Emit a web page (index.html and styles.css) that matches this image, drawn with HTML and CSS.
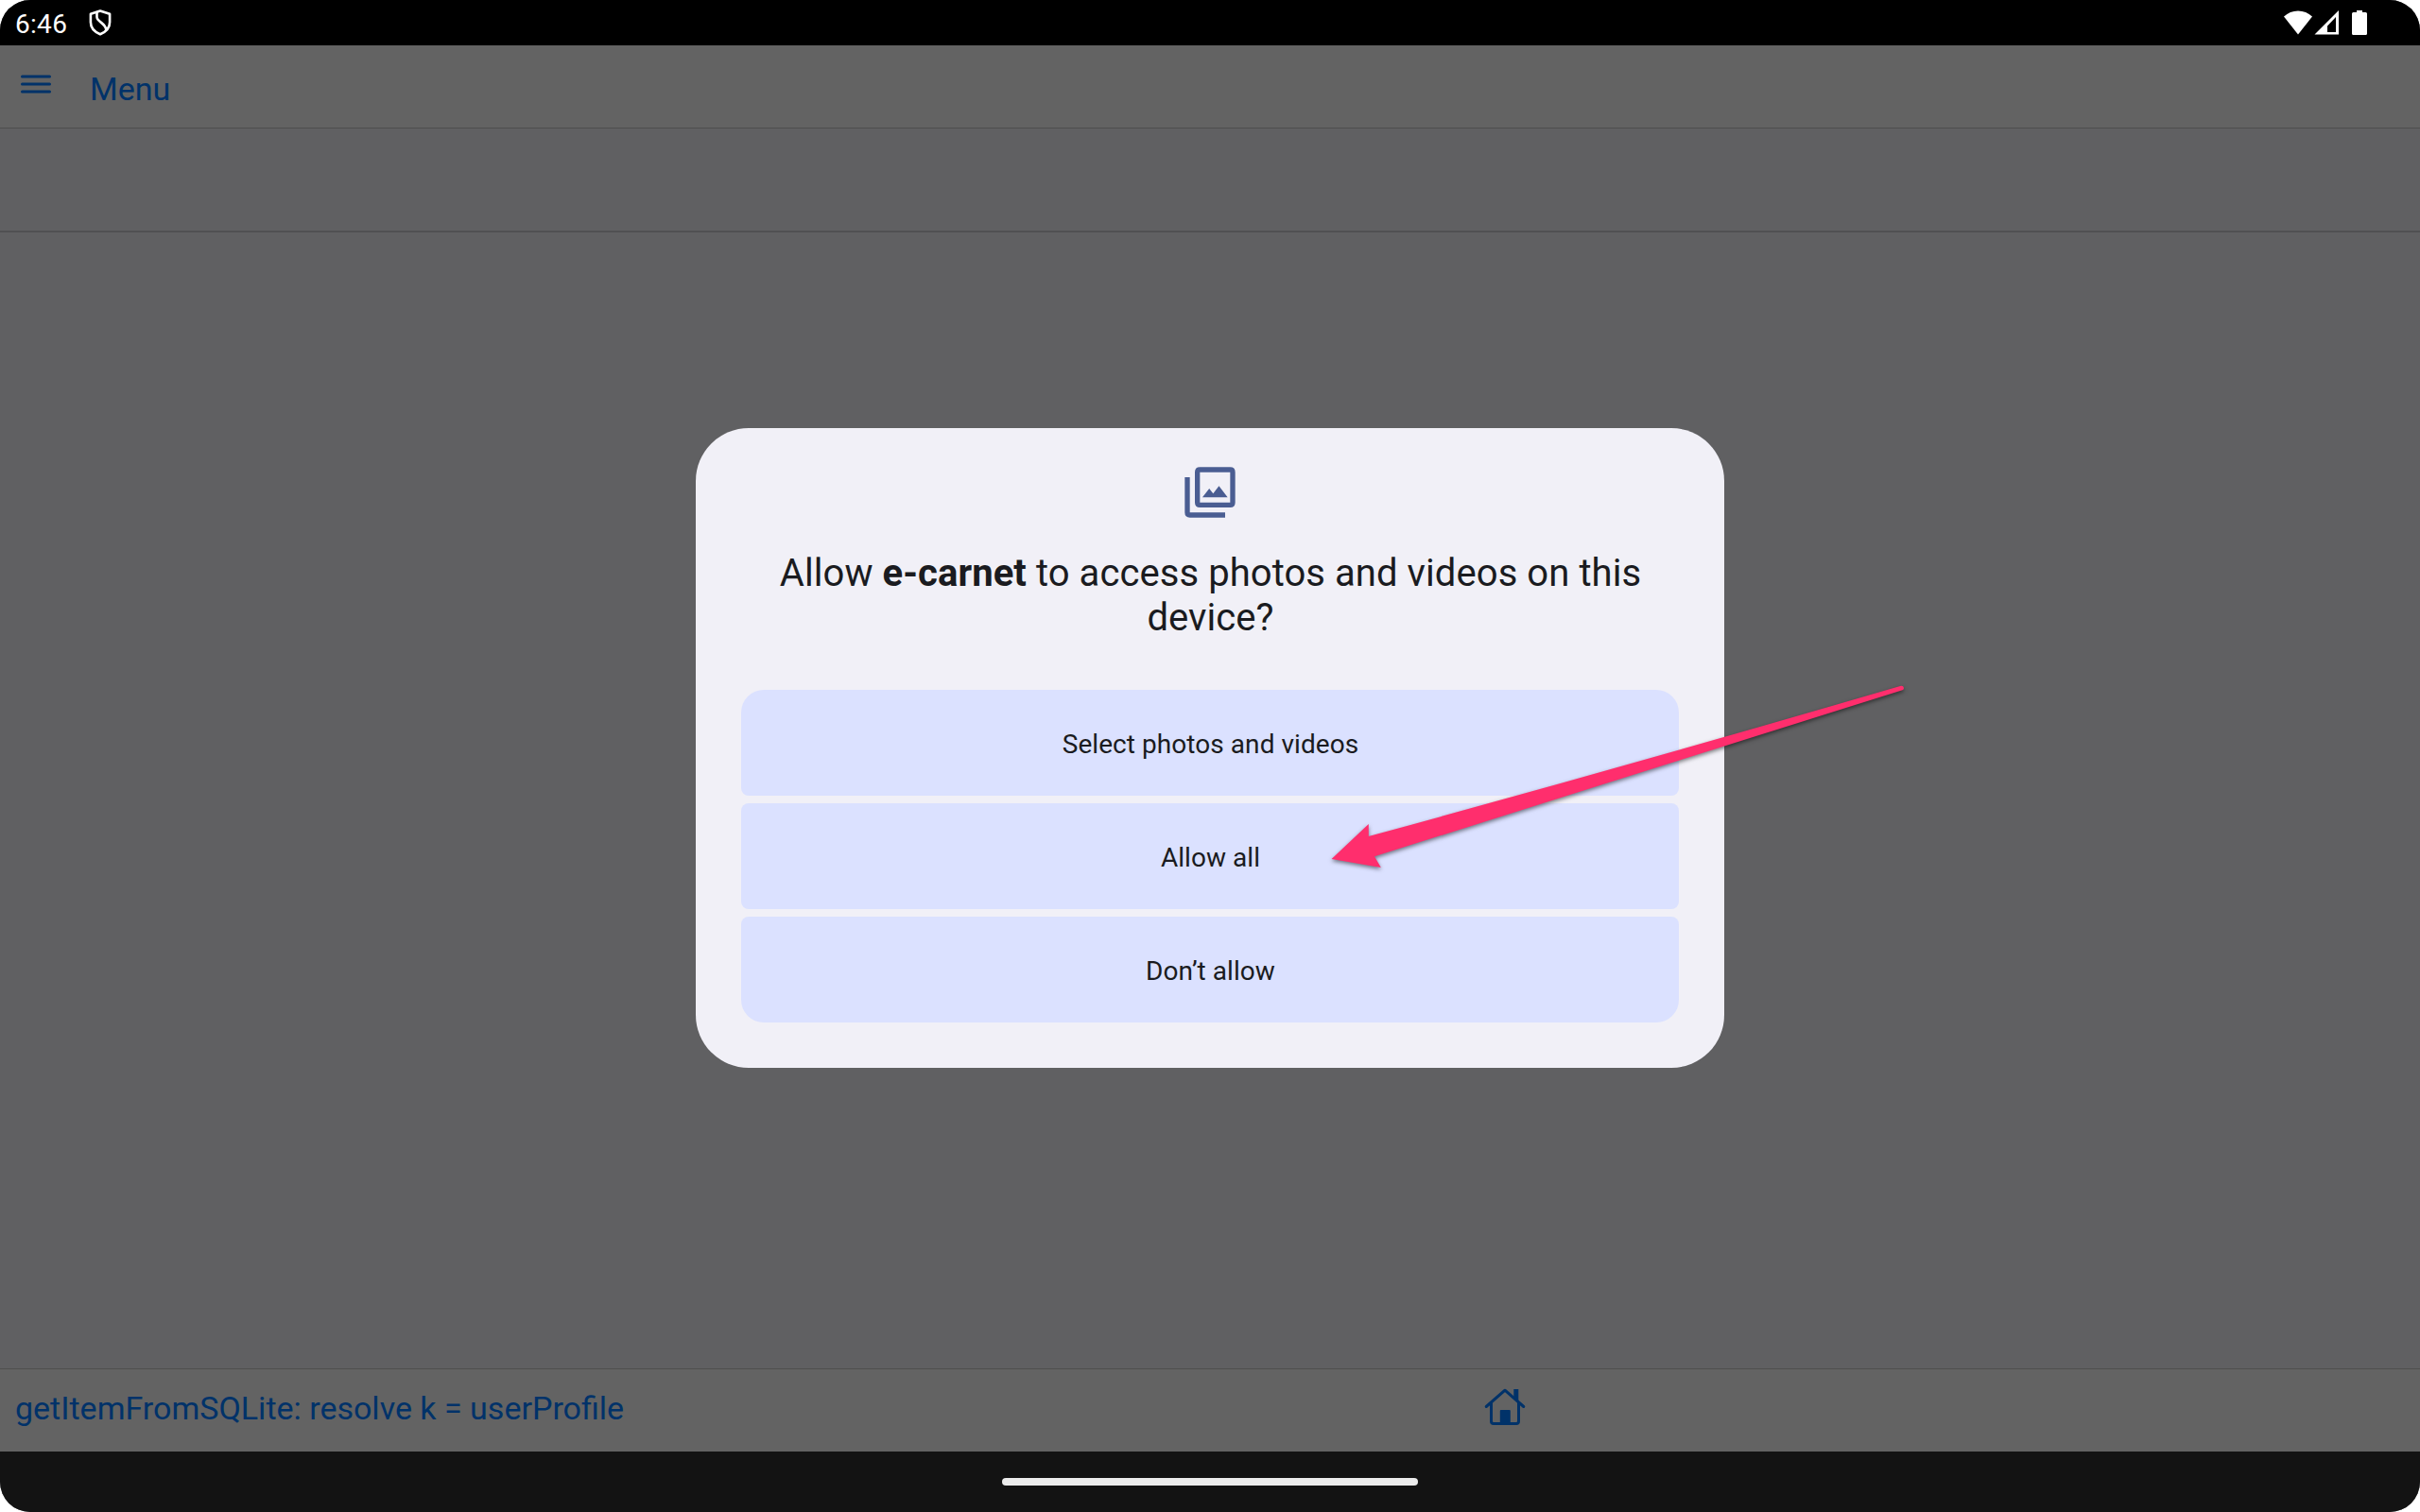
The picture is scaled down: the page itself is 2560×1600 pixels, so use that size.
FILE: index.html
```
<!DOCTYPE html>
<html lang="en">
<head>
<meta charset="utf-8">
<title>e-carnet</title>
<link rel="stylesheet" href="styles.css">
</head>
<body>
<div class="screen">
  <header class="status">
    <span class="clock">6:46</span>
    <svg class="shield" viewBox="0 0 24 28" fill="none" stroke="#fff" stroke-width="2.6" stroke-linejoin="round">
      <path d="M12 1.6 1.9 4.8v8.7c0 5.6 4.2 10.300 10.100 12.800 5.900-2.500 10.100-7.200 10.100-12.800V4.800Z"/>
      <path d="M8.500 2.800v5.200c0 5.200 9.800 6.500 9.800 14"/>
    </svg>
    <span class="grow"></span>
    <svg class="wifi" viewBox="0 0 30 26" fill="#fff"><path d="M0 6.500C4.200 2.500 9.200.5 15 .5s10.800 2 15 6L15 25.500Z"/></svg>
    <svg class="signal" viewBox="0 0 26 26"><path fill="#fff" fill-rule="evenodd" d="M.5 25.500 26 0v25.500ZM14 23h9V7l-9 9.500Z"/></svg>
    <svg class="battery" viewBox="0 0 16 26" fill="#fff"><path d="M5 0h6v2h3.500Q16 2 16 3.500v21q0 1.500-1.500 1.500h-13Q0 26 0 24.500v-21Q0 2 1.500 2H5Z"/></svg>
  </header>
  <nav class="toolbar">
    <svg class="burger" viewBox="0 0 32 20" stroke="#003269" stroke-width="3" stroke-linecap="round"><path d="M1.500 2h29M1.500 10h29M1.500 18h29"/></svg>
    <span class="toolbar-title">Menu</span>
  </nav>
  <div class="subbar"></div>
  <main class="content"></main>
  <footer class="footer">
    <span class="log">getItemFromSQLite: resolve k = userProfile</span>
    <svg class="home" viewBox="0 0 44 40" fill="none" stroke="#003269" stroke-width="3" stroke-linecap="round" stroke-linejoin="round">
      <path d="M2.200 19.500 22 2.200 41.800 19.500"/>
      <path d="M7.500 16v19q0 2.500 2.500 2.500h24q2.500 0 2.500-2.500V16"/>
      <path fill="#003269" stroke="none" d="M31.300 1h5v13l-5-4.500ZM16.800 24q0-1 1-1h9q1 0 1 1v13.500h-11Z"/>
    </svg>
  </footer>
  <div class="gesture"><div class="pill"></div></div>

  <div class="overlay">
    <section class="dialog" role="dialog">
      <svg class="library" viewBox="0 0 24 24" fill="#4a5d92"><path fill-rule="evenodd" d="M8 2h12q2 0 2 2v12q0 2-2 2H8q-2 0-2-2V4q0-2 2-2Zm0 2v12h12V4Z"/><path d="M9 14h10l-3.450-4.500-2.300 3-1.550-2ZM2 6h2v14h14v2H4q-2 0-2-2Z"/></svg>
      <h1 class="question">Allow <b>e-carnet</b> to access photos and videos on this device?</h1>
      <div class="choices">
        <button class="choice" type="button">Select photos and videos</button>
        <button class="choice" type="button">Allow all</button>
        <button class="choice" type="button">Don’t allow</button>
      </div>
    </section>
  </div>

  <svg class="arrow" viewBox="0 0 620 210" fill="#ff2e6d"><path d="M8.600 199 47.800 162V175Q330 98 611 15.800Q613.500 15.500 614 18Q614 20 612.500 20.300Q330 109 54 196.300L60.800 208Z"/></svg>
</div>
</body>
</html>
```
FILE: styles.css
```
* { box-sizing: border-box; }
html { background: #fff; }
body { margin: 0; font-family: Roboto, "Liberation Sans", sans-serif; }
svg { display: block; flex: none; }

.screen {
  position: relative;
  display: flex;
  flex-direction: column;
  width: 2560px;
  height: 1600px;
  overflow: hidden;
  border-radius: 32px;
  background: #606062;
}

.status {
  display: flex;
  align-items: flex-start;
  height: 48px;
  padding: 0 56px 0 16px;
  background: #000;
}
.clock { width: 78px; padding-top: 9px; color: #fff; font-size: 28px; line-height: 33px; letter-spacing: 0.3px; }
.shield { width: 24px; height: 28px; margin-top: 10px; }
.grow { flex: 1; }
.wifi { width: 30px; height: 26px; margin-top: 11px; }
.signal { width: 26px; height: 26px; margin: 11px 0 0 2px; }
.battery { width: 16px; height: 26px; margin: 11px 0 0 14px; }

.toolbar {
  display: flex;
  align-items: flex-start;
  height: 88px;
  padding-left: 22px;
  border-bottom: 1px solid #4e4e4e;
  background: #636363;
}
.burger { width: 32px; height: 20px; margin-top: 31px; }
.toolbar-title { margin: 26px 0 0 41px; color: #003269; font-size: 34px; line-height: 40px; }

.subbar { height: 110px; border-bottom: 2px solid #505052; }
.content { flex: 1; }

.footer {
  display: flex;
  align-items: flex-start;
  height: 88px;
  padding-left: 16px;
  border-top: 1px solid #4e4e4e;
  background: #636363;
}
.log { width: 1554px; padding-top: 21px; color: #003269; font-size: 34px; line-height: 40px; white-space: nowrap; }
.home { width: 44px; height: 40px; margin-top: 20px; }

.gesture { height: 64px; padding-top: 28px; background: #131313; }
.pill { width: 440px; height: 8px; margin: 0 auto; border-radius: 4px; background: #ececec; }

.overlay {
  position: absolute;
  inset: 0;
  display: flex;
  justify-content: center;
  align-items: flex-start;
  padding-top: 453px;
}
.dialog {
  display: flex;
  flex-direction: column;
  align-items: center;
  width: 1088px;
  height: 677px;
  padding: 36px 48px 48px;
  border-radius: 56px;
  background: #f1f0f7;
  color: #1a1b20;
}
.library { width: 64px; height: 64px; }
.question {
  width: 944px;
  margin: 30px 0 0;
  padding-left: 1px;
  font-size: 40px;
  font-weight: 400;
  line-height: 47px;
  letter-spacing: 0.07px;
  text-align: center;
}
.question b { font-weight: 700; }
.choices { display: flex; flex-direction: column; gap: 8px; width: 100%; margin-top: auto; }
.choice {
  height: 112px;
  padding: 2px 0 0 1px;
  border: 0;
  border-radius: 8px;
  background: #dbe1ff;
  color: #1a1b20;
  font: 400 28px/33px Roboto, "Liberation Sans", sans-serif;
  letter-spacing: 0.06px;
}
.choice:first-child { border-radius: 24px 24px 8px 8px; }
.choice:last-child { border-radius: 8px 8px 24px 24px; }

.arrow {
  position: absolute;
  left: 1400px;
  top: 710px;
  width: 620px;
  height: 210px;
  overflow: visible;
  filter: drop-shadow(0 2px 2px rgba(0, 0, 0, 0.5));
}
```
